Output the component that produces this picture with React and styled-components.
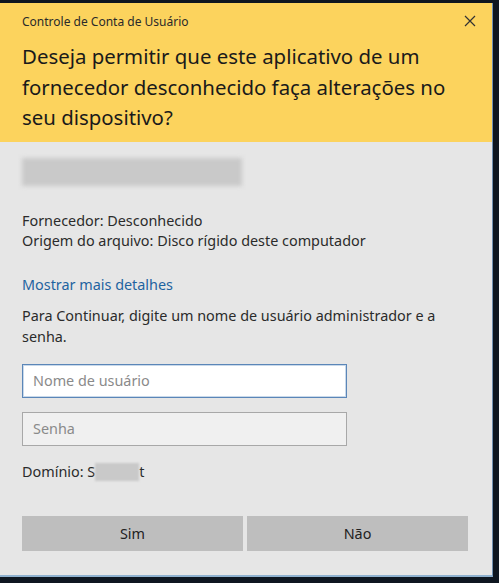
import styled, { createGlobalStyle } from 'styled-components';

const GlobalStyle = createGlobalStyle`
  html, body {
    margin: 0;
    padding: 0;
    background: #0e1620;
  }
  body {
    font-family: 'Noto Sans', 'Open Sans', sans-serif;
    color: #1b1b1b;
  }
`;

const Screen = styled.div`
  width: 499px;
  height: 583px;
  padding-top: 3px;
  box-sizing: border-box;
  overflow: hidden;
`;

const Window = styled.div`
  width: 493px;
  height: 574px;
  background: #e6e6e6;
  border-right: 1px solid #6f8fb0;
  border-bottom: 2px solid #8fb1cf;
  display: flex;
  flex-direction: column;
  box-sizing: border-box;
`;

const Header = styled.div`
  background: #fcd35d;
  padding: 7px 22px 9px 22px;
  display: flex;
  flex-direction: column;
`;

const TitleRow = styled.div`
  display: flex;
  justify-content: space-between;
  align-items: center;
  height: 22px;
`;

const Caption = styled.span`
  font-size: 12px;
  color: #2a2a2a;
`;

const Close = styled.button`
  border: none;
  background: none;
  padding: 0;
  margin-right: -7px;
  width: 14px;
  height: 14px;
  display: flex;
  align-items: center;
  justify-content: center;
  cursor: pointer;
`;

const Question = styled.h1`
  margin: 9px 0 0 0;
  font-size: 20.4px;
  font-weight: 400;
  line-height: 30.5px;
  color: #1a1a1a;
`;

const Body = styled.div`
  padding: 16px 22px 0 22px;
  display: flex;
  flex-direction: column;
  font-size: 14.4px;
  color: #2b2b2b;
`;

const Blurred = styled.div`
  width: ${(p) => p.$w}px;
  height: ${(p) => p.$h}px;
  background: #c9c9c9;
  filter: blur(${(p) => p.$blur}px);
  display: inline-block;
  vertical-align: middle;
`;

const Info = styled.div`
  margin-top: 25px;
  line-height: 20px;
`;

const MoreLink = styled.a`
  margin-top: 24px;
  color: #1f63a0;
  text-decoration: none;
  line-height: 20px;
  cursor: pointer;
`;

const Prompt = styled.p`
  margin: 10px 0 0 0;
  line-height: 21px;
  max-width: 440px;
`;

const Field = styled.input`
  width: 325px;
  height: 34px;
  box-sizing: border-box;
  margin-top: ${(p) => p.$gap}px;
  padding: 0 10px;
  font-family: inherit;
  font-size: 14.4px;
  border: 1px solid ${(p) => (p.$active ? '#5b86b8' : '#a8a8a8')};
  box-shadow: ${(p) => (p.$active ? 'inset 0 0 0 1px #c9d9ea' : 'none')};
  background: ${(p) => (p.$active ? '#ffffff' : '#f0f0f0')};
  outline: none;
  &::placeholder {
    color: #8a8a8a;
  }
`;

const Domain = styled.div`
  margin-top: 16px;
  line-height: 20px;
  display: flex;
  align-items: center;
`;

const Buttons = styled.div`
  margin-top: 34px;
  display: grid;
  grid-template-columns: 221px 221px;
  gap: 4px;
`;

const Button = styled.button`
  height: 35px;
  border: none;
  background: #bebebe;
  font-family: inherit;
  font-size: 14.4px;
  color: #222;
  cursor: pointer;
`;

export default function App() {
  return (
    <Screen>
      <GlobalStyle />
      <Window>
        <Header>
          <TitleRow>
            <Caption>Controle de Conta de Usuário</Caption>
            <Close aria-label="Fechar">
              <svg width="12" height="12" viewBox="0 0 12 12">
                <path d="M1 1 L11 11 M11 1 L1 11" stroke="#333" strokeWidth="1.2" />
              </svg>
            </Close>
          </TitleRow>
          <Question>
            Deseja permitir que este aplicativo de um fornecedor desconhecido
            faça alterações no seu dispositivo?
          </Question>
        </Header>
        <Body>
          <Blurred $w={220} $h={28} $blur={2} />
          <Info>
            Fornecedor: Desconhecido
            <br />
            Origem do arquivo: Disco rígido deste computador
          </Info>
          <MoreLink>Mostrar mais detalhes</MoreLink>
          <Prompt>
            Para Continuar, digite um nome de usuário administrador e a senha.
          </Prompt>
          <Field $active $gap={17} placeholder="Nome de usuário" autoFocus />
          <Field $gap={14} type="password" placeholder="Senha" />
          <Domain>
            Domínio: S
            <Blurred $w={44} $h={18} $blur={1} />
            t
          </Domain>
          <Buttons>
            <Button>Sim</Button>
            <Button>Não</Button>
          </Buttons>
        </Body>
      </Window>
    </Screen>
  );
}
